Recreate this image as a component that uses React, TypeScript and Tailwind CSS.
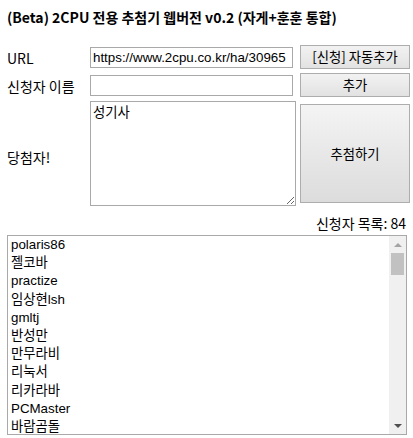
import React from "react";

const KR = "font-['Noto_Sans_CJK_KR',sans-serif]";
const AR = "font-['Liberation_Sans','Noto_Sans_CJK_KR',sans-serif]";

const items = [
  "polaris86",
  "젤코바",
  "practize",
  "임상현lsh",
  "gmltj",
  "반성만",
  "만무라비",
  "리눅서",
  "리카라바",
  "PCMaster",
  "바람곰돌",
  "야옹이",
];

export default function App() {
  return (
    <div className={`w-[413px] h-[438px] bg-white text-black pl-[7px] pr-[7px] pt-[8px] overflow-hidden ${KR}`}>
      <div className="h-[18px] leading-[18px] text-[14px] font-bold">
        (Beta) 2CPU 전용 추첨기 웹버전 v0.2 (자게+훈훈 통합)
      </div>
      <div className="mt-[19px] grid grid-cols-[79px_206px_110px] grid-rows-[24px_24px_105px] gap-x-[4px] gap-y-[4px]">
        <div className="flex items-center text-[14px] pt-[2px]">URL</div>
        <div className="flex items-center">
          <input
            readOnly
            value="https://www.2cpu.co.kr/ha/30965"
            className={`w-[203px] h-[21px] border border-[#a9a9a9] px-[2px] text-[13.33px] outline-none ${AR}`}
          />
        </div>
        <button className="h-[24px] border border-[#adadad] bg-gradient-to-b from-[#f2f2f2] to-[#e2e2e2] text-[13.33px] leading-none">
          [신청] 자동추가
        </button>

        <div className="flex items-center text-[14px] pt-[2px]">신청자 이름</div>
        <div className="flex items-center">
          <input
            readOnly
            value=""
            className={`w-[203px] h-[21px] border border-[#a9a9a9] px-[2px] text-[13.33px] outline-none ${AR}`}
          />
        </div>
        <button className="h-[24px] border border-[#adadad] bg-gradient-to-b from-[#f2f2f2] to-[#e2e2e2] text-[13.33px] leading-none">
          추가
        </button>

        <div className="flex items-center text-[14px] pt-[7px]">당첨자!</div>
        <textarea
          readOnly
          value="성기사"
          className={`w-[206px] h-[105px] border border-[#a9a9a9] px-[2px] py-[1px] text-[13.33px] leading-[17px] outline-none resize ${KR}`}
        />
        <div className="flex items-center">
          <button className="w-[110px] h-[99px] border border-[#adadad] bg-gradient-to-b from-[#f4f4f4] to-[#dcdcdc] text-[13.33px]">
            추첨하기
          </button>
        </div>
      </div>
      <div className="mt-[7px] h-[20px] leading-[20px] text-right pr-[0px] text-[14px] w-[399px]">
        신청자 목록: 84
      </div>
      <div className="mt-[2px] w-[400px] h-[200px] border border-[#a9a9a9] flex overflow-hidden">
        <div className={`flex-1 overflow-hidden text-[13.33px] ${AR}`}>
          {items.map((it) => (
            <div key={it} className="h-[18.2px] leading-[18px] px-[3px] whitespace-nowrap">
              {it}
            </div>
          ))}
        </div>
        <div className="w-[17px] bg-[#f0f0f0] flex flex-col items-center">
          <div className="h-[17px] w-full flex items-center justify-center">
            <div className="w-0 h-0 border-l-[4px] border-r-[4px] border-b-[4px] border-l-transparent border-r-transparent border-b-[#a3a3a3]" />
          </div>
          <div className="w-[13px] h-[22px] bg-[#c1c1c1]" />
          <div className="flex-1" />
          <div className="h-[17px] w-full flex items-center justify-center">
            <div className="w-0 h-0 border-l-[4px] border-r-[4px] border-t-[4px] border-l-transparent border-r-transparent border-t-[#505050]" />
          </div>
        </div>
      </div>
    </div>
  );
}
